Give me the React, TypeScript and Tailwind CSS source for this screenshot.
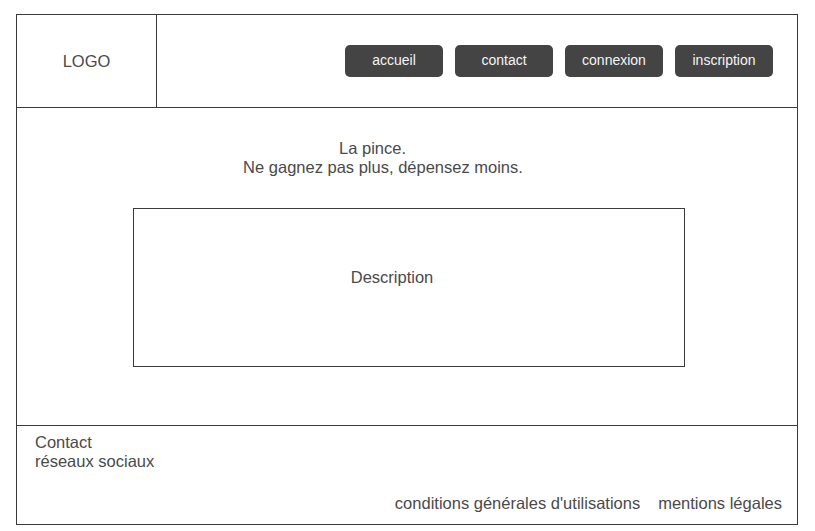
const navItems = ['accueil', 'contact', 'connexion', 'inscription'];

export default function App() {
  return (
    <div className="w-[815px] h-[531px] bg-white pt-[14px] pl-[16px] font-['Liberation_Sans',Arial,sans-serif] text-[#444]">
      <div className="w-[782px] h-[511px] flex flex-col border border-[#3a3a3a]">
        {/* Header */}
        <header className="h-[93px] flex border-b border-[#3a3a3a]">
          <div className="w-[140px] border-r border-[#3a3a3a] flex items-center justify-center pt-[1px] text-[16.5px] text-[#4a4a4a]">
            LOGO
          </div>
          <nav className="flex-1 flex items-center justify-end gap-[12px] pr-[24px]">
            {navItems.map((item) => (
              <button
                key={item}
                className="w-[98px] h-[32px] rounded-[5px] bg-[#444444] text-[#f4f4f4] text-[14px] flex items-center justify-center pb-[2px]"
              >
                {item}
              </button>
            ))}
          </nav>
        </header>

        {/* Main */}
        <main className="h-[318px] border-b border-[#3a3a3a] flex flex-col">
          <div className="pt-[31px] pr-[48px] text-center text-[16.5px] leading-[19px] text-[#4a4a4a]">
            <p className="pr-[21px]">La pince.</p>
            <p>Ne gagnez pas plus, dépensez moins.</p>
          </div>
          <div className="mt-[31px] ml-[116px] w-[552px] h-[159px] border border-[#3a3a3a] flex justify-center pt-[56px] pr-[34px] text-[16.5px] text-[#4a4a4a]">
            Description
          </div>
        </main>

        {/* Footer */}
        <footer className="flex-1 flex flex-col justify-between pl-[18px] pr-[15px] pt-[7px] pb-[11px] text-[16.5px] leading-[19px] text-[#4a4a4a]">
          <div>
            <p>Contact</p>
            <p>réseaux sociaux</p>
          </div>
          <div className="flex justify-end gap-[18px]">
            <span>conditions générales d'utilisations</span>
            <span>mentions légales</span>
          </div>
        </footer>
      </div>
    </div>
  );
}
